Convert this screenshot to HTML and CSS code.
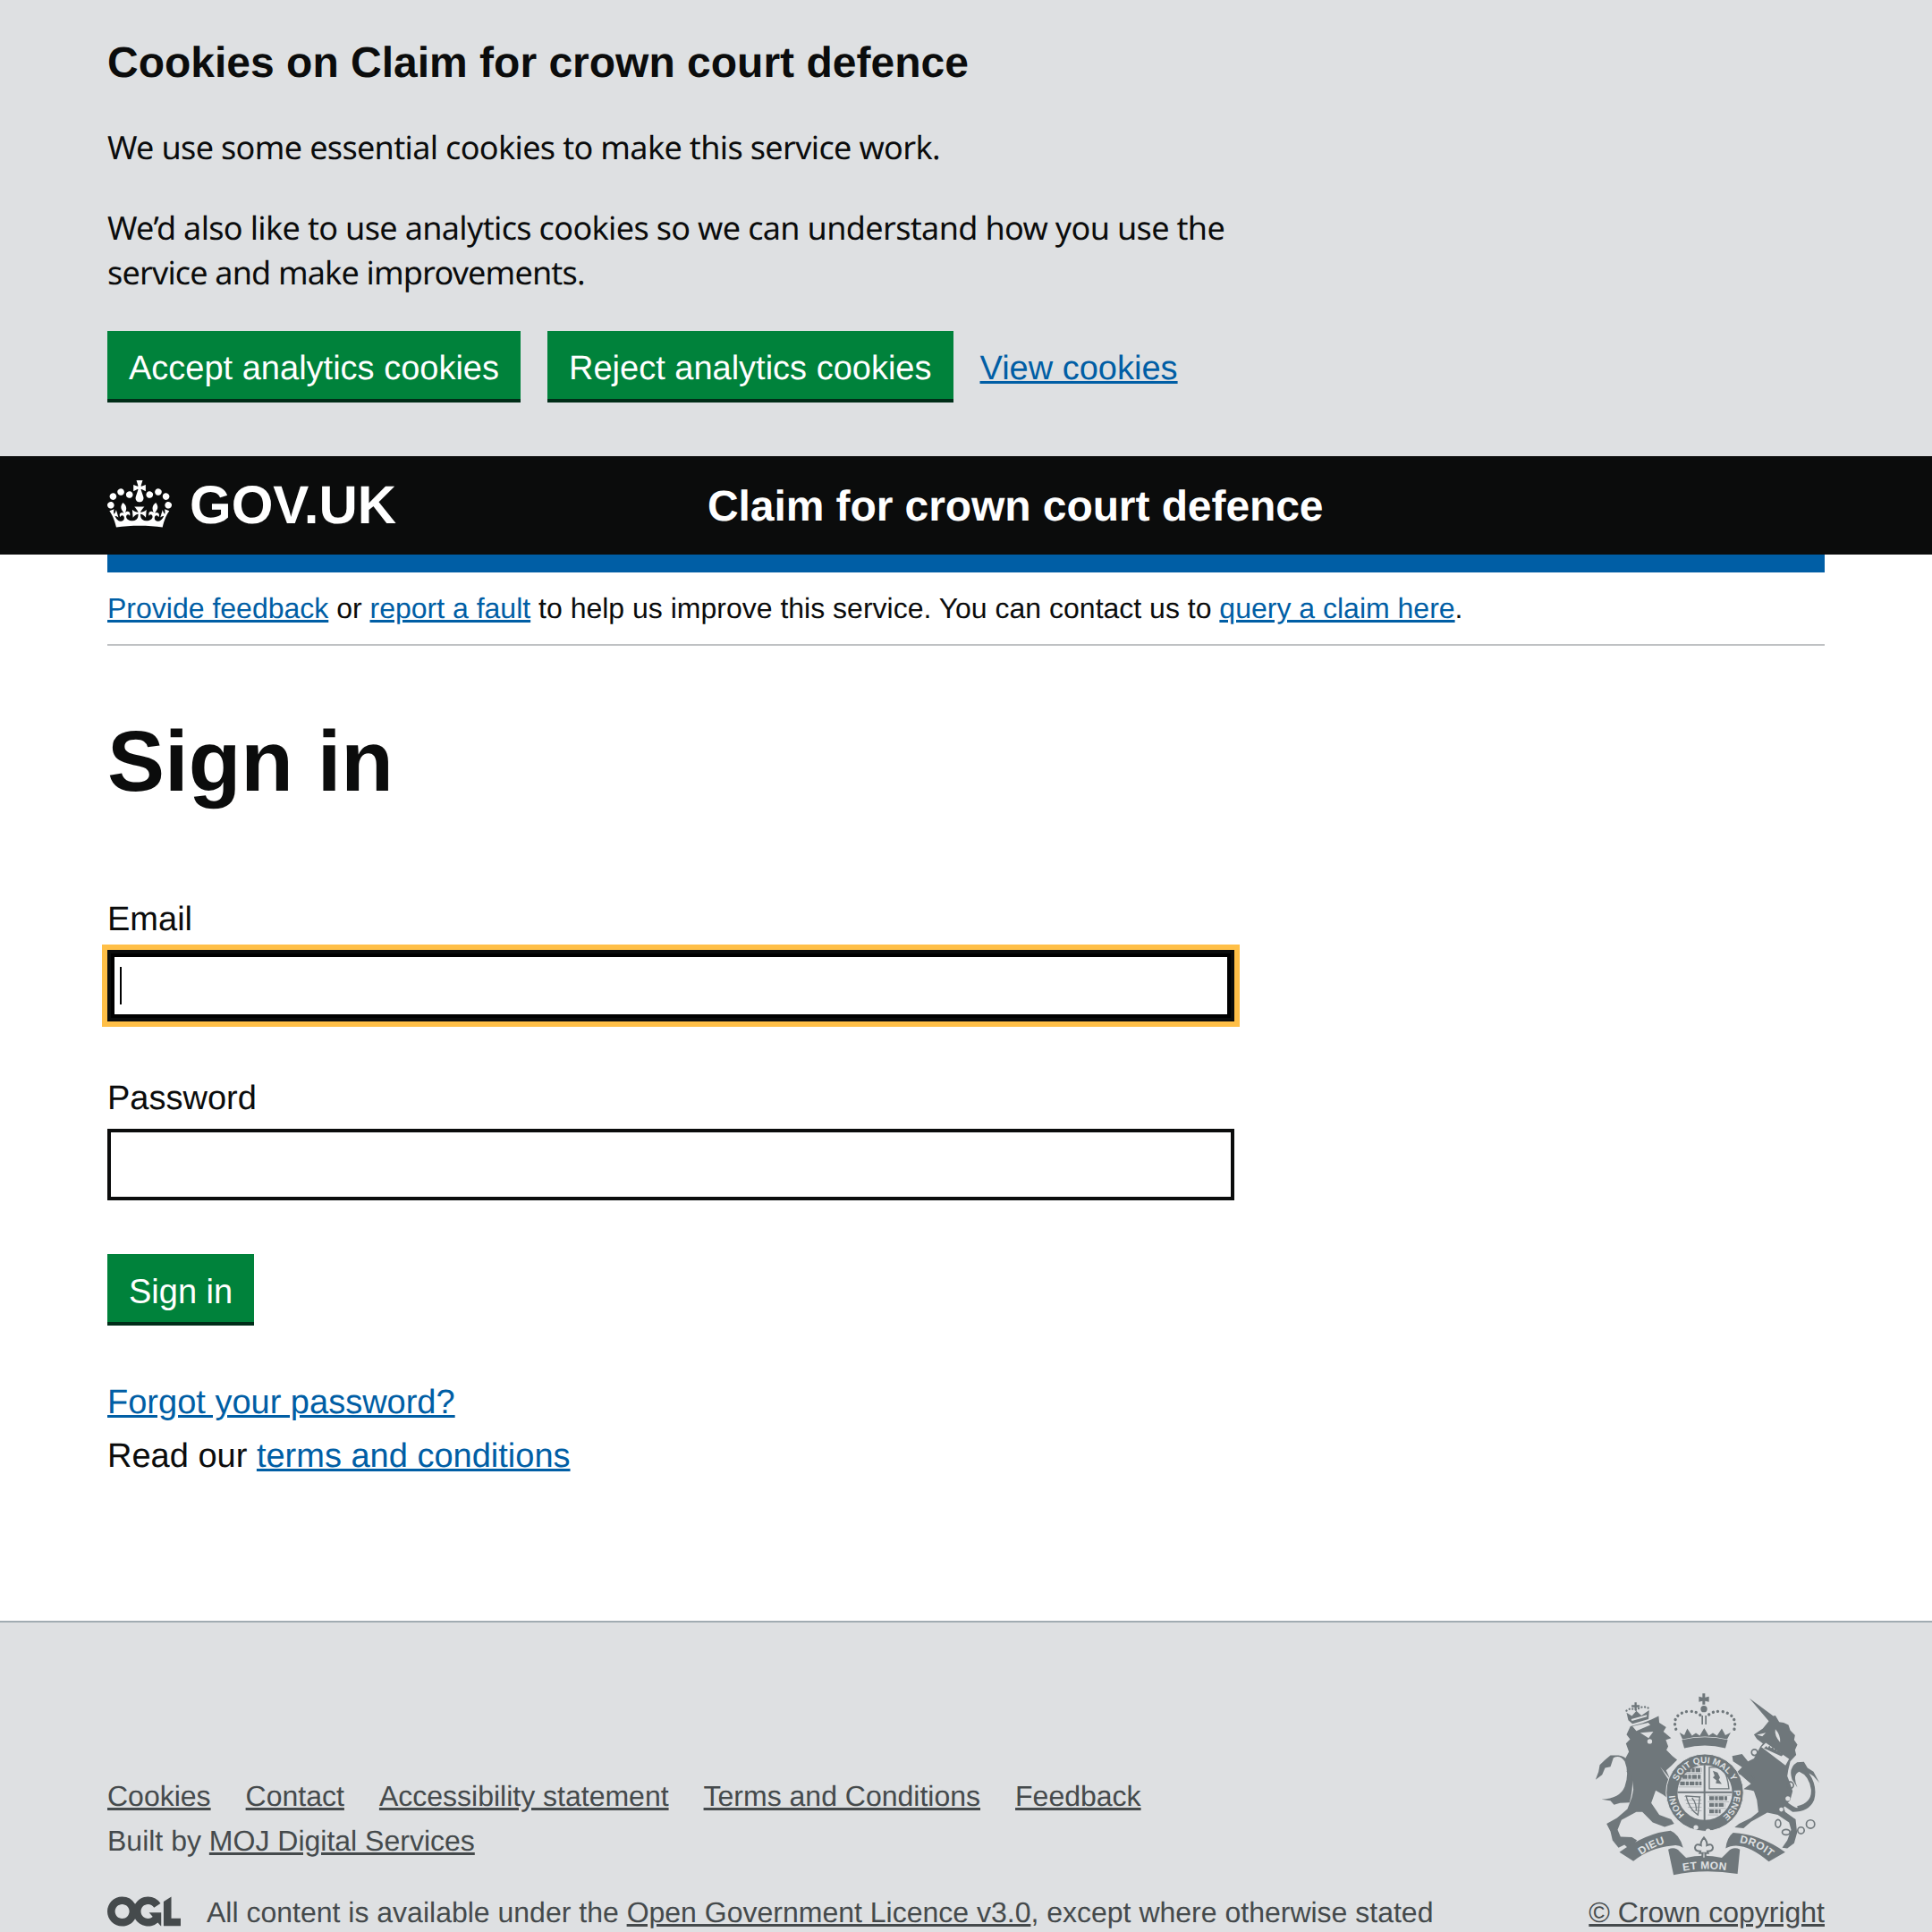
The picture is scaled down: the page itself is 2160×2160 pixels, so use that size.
FILE: index.html
```
<!DOCTYPE html>
<html lang="en">
<head>
<meta charset="utf-8">
<title>Sign in - Claim for crown court defence</title>
<link rel="stylesheet" href="styles.css">
</head>
<body>
<section class="cookie-banner">
  <div class="wrap">
    <h2 class="cookie-title">Cookies on Claim for crown court defence</h2>
    <p class="cookie-text">We use some essential cookies to make this service work.</p>
    <p class="cookie-text">We’d also like to use analytics cookies so we can understand how you use the<br><span class="cookie-tight">service and make improvements.</span></p>
    <div class="cookie-actions">
      <a class="btn" href="#">Accept analytics cookies</a>
      <a class="btn" href="#">Reject analytics cookies</a>
      <a class="link" href="#">View cookies</a>
    </div>
  </div>
</section>
<header class="site-header">
  <div class="wrap header-row">
    <a class="logo" href="#">
      <svg class="crown" viewBox="0 0 132 97" aria-hidden="true"><path fill="currentColor" fill-rule="evenodd" d="M25 30.2c3.5 1.5 7.7-.2 9.1-3.7 1.5-3.6-.2-7.8-3.9-9.2-3.6-1.4-7.6.3-9.1 3.9-1.4 3.5.3 7.5 3.9 9zM9 39.5c3.6 1.5 7.8-.2 9.2-3.7 1.5-3.6-.2-7.8-3.9-9.1-3.6-1.5-7.6.2-9.1 3.8-1.4 3.5.3 7.5 3.8 9zM4.4 57.2c3.5 1.5 7.7-.2 9.1-3.8 1.5-3.6-.2-7.7-3.9-9.1-3.5-1.5-7.6.3-9.1 3.8-1.4 3.5.3 7.6 3.9 9.1zm38.3-21.4c3.5 1.5 7.7-.2 9.1-3.8 1.5-3.6-.2-7.7-3.9-9.1-3.6-1.5-7.6.3-9.1 3.8-1.3 3.6.4 7.7 3.9 9.1zm64.4-5.6c-3.6 1.5-7.8-.2-9.1-3.7-1.5-3.6.2-7.8 3.8-9.2 3.6-1.4 7.7.3 9.2 3.9 1.3 3.5-.4 7.5-3.9 9zm15.9 9.3c-3.6 1.5-7.7-.2-9.1-3.7-1.5-3.6.2-7.8 3.7-9.1 3.6-1.5 7.7.2 9.2 3.8 1.5 3.5-.3 7.5-3.8 9zm4.7 17.7c-3.6 1.5-7.8-.2-9.2-3.8-1.5-3.6.2-7.7 3.9-9.1 3.6-1.5 7.7.3 9.2 3.8 1.3 3.5-.4 7.6-3.9 9.1zM89.3 35.8c-3.6 1.5-7.8-.2-9.2-3.8-1.4-3.6.2-7.7 3.9-9.1 3.6-1.5 7.7.3 9.2 3.8 1.4 3.6-.3 7.7-3.9 9.1zM69.7 17.7l8.9 4.7V9.3l-8.9 2.8c-.2-.3-.5-.6-.9-.9L72.4 0H59.6l3.6 11.2c-.3.3-.6.5-.9.9l-8.8-2.8v13.1l8.8-4.7c.3.3.6.7.9.9l-5 15.4v.1c-.2.8-.4 1.6-.4 2.4 0 4.1 3.1 7.5 7 8.1h.2c.3 0 .7.1 1 .1.4 0 .7 0 1-.1h.2c4-.6 7.1-4.1 7.1-8.1 0-.8-.1-1.7-.4-2.4V34l-5.1-15.4c.4-.2.7-.6 1-.9zM66 92.8c16.9 0 32.8 1.1 47.1 3.2 4-16.9 8.9-26.7 14-33.5l-9.6-3.4c1 4.9 1.1 7.2 0 10.2-1.5-1.4-3-4.3-4.2-8.7L108.6 76c2.8-2 5-3.2 7.5-3.3-4.4 9.4-10 11.9-13.6 11.2-4.3-.8-6.3-4.6-5.6-7.9 1-4.7 5.7-5.9 8-.5 4.3-8.7-3-11.4-7.6-8.8 7.1-7.2 7.9-13.5 2.1-21.1-8 6.1-8.1 12.3-4.5 20.8-4.7-5.4-12.1-2.5-9.5 6.2 3.4-5.2 7.9-2 7.2 3.1-.6 4.3-6.4 7.8-13.5 7.2-10.3-.9-10.9-8-11.2-13.8 2.5-.5 7.1 1.8 11 7.3L80.2 60c-4.1 4.4-8 5.3-12.3 5.4 1.4-4.4 8-11.6 8-11.6H55.5s6.4 7.2 7.9 11.6c-4.2-.1-8-1-12.3-5.4l1.4 16.4c3.9-5.5 8.5-7.7 10.9-7.3-.3 5.8-.9 12.8-11.1 13.8-7.2.6-12.9-2.9-13.5-7.2-.7-5 3.8-8.3 7.1-3.1 2.7-8.7-4.6-11.6-9.4-6.2 3.7-8.5 3.6-14.7-4.6-20.8-5.8 7.6-5 13.9 2.2 21.1-4.7-2.6-11.9.1-7.7 8.8 2.3-5.5 7.1-4.2 8.1.5.7 3.3-1.3 7.1-5.7 7.9-3.5.7-9-1.8-13.5-11.2 2.5.1 4.7 1.3 7.5 3.3l-4.7-15.4c-1.2 4.4-2.7 7.2-4.3 8.7-1.1-3-.9-5.3 0-10.2l-9.5 3.4c5 6.9 9.9 16.7 14 33.5 14.8-2.1 30.8-3.2 47.7-3.2z"/></svg>
      <span class="logotype">GOV.UK</span>
    </a>
    <a class="service-name" href="#">Claim for crown court defence</a>
  </div>
</header>
<div class="wrap">
  <div class="blue-bar"></div>
  <p class="phase"><a class="link" href="#">Provide feedback</a> or <a class="link" href="#">report a fault</a> to help us improve this service. You can contact us to <a class="link" href="#">query a claim here</a>.</p>
  <main class="main">
    <h1 class="page-title">Sign in</h1>
    <form class="form">
      <div class="field">
        <label class="label" for="email">Email</label>
        <div class="input-wrap">
          <input class="input input-focus" id="email" type="email">
          <span class="caret"></span>
        </div>
      </div>
      <div class="field">
        <label class="label" for="password">Password</label>
        <div class="input-wrap">
          <input class="input" id="password" type="password">
        </div>
      </div>
      <button class="btn btn-submit" type="button">Sign in</button>
    </form>
    <p class="body-line"><a class="link" href="#">Forgot your password?</a></p>
    <p class="body-line">Read our <a class="link" href="#">terms and conditions</a></p>
  </main>
</div>
<footer class="footer">
  <div class="wrap footer-row">
    <div class="footer-meta">
      <ul class="footer-links">
        <li><a href="#">Cookies</a></li>
        <li><a href="#">Contact</a></li>
        <li><a href="#">Accessibility statement</a></li>
        <li><a href="#">Terms and Conditions</a></li>
        <li><a href="#">Feedback</a></li>
      </ul>
      <p class="footer-built">Built by <a href="#">MOJ Digital Services</a></p>
      <div class="licence">
        <svg class="ogl" viewBox="0 0 483.2 195.7" aria-hidden="true"><path fill="currentColor" d="M421.5 142.8V.1l-50.7 32.3v161.1h112.4v-50.7zm-122.3-9.6A47.12 47.12 0 0 1 221 97.8c0-26 21.1-47.1 47.1-47.1 16.7 0 31.4 8.7 39.7 21.8l42.7-27.2A97.63 97.63 0 0 0 268.1 0c-36.5 0-68.3 20.1-85.1 49.7A98 98 0 0 0 97.8 0C43.9 0 0 43.9 0 97.8s43.9 97.8 97.8 97.8c36.5 0 68.3-20.1 85.1-49.7a97.76 97.76 0 0 0 149.6 25.4l19.4 22.2h3v-87.8h-80l24.3 27.5zM97.8 145c-26 0-47.1-21.1-47.1-47.1s21.1-47.1 47.1-47.1 47.2 21 47.2 47S123.8 145 97.8 145"/></svg>
        <span>All content is available under the <a href="#">Open Government Licence v3.0</a>, except where otherwise stated</span>
      </div>
    </div>
    <div class="footer-crest">
      <svg class="crest" viewBox="60 65 765 625" aria-hidden="true">
        <defs>
          <path id="garter-top" d="M343 370 A98 98 0 0 1 527 370"/>
          <path id="garter-right" d="M533 395 A98 98 0 0 1 494 486"/>
          <path id="garter-left" d="M366 478 A100 100 0 0 1 335 415"/>
          <path id="motto-l" d="M205 628 Q255 585 322 570"/>
          <path id="motto-m" d="M345 672 Q430 652 525 669"/>
          <path id="motto-r" d="M540 572 Q610 578 664 630"/>
        </defs>
        <g id="crest-art">
        <!-- royal crown -->
        <path class="crest-fill" d="M427 72h9v13l13-3v18l-13-3v12h-9v-12l-12 3V82l12 3z"/>
        <circle class="crest-fill" cx="432" cy="124" r="11"/>
        <path class="crest-fill" d="M424 146h5v30h-5zM436 146h5v30h-5z"/>
        <path class="crest-beadline" d="M338 192 Q322 142 378 132 Q410 130 424 150"/>
        <path class="crest-beadline" d="M534 192 Q546 142 490 132 Q458 130 442 150"/>
        <path class="crest-fill" d="M350 203 L366 212 L376 190 L392 214 L405 205 L418 214 L433 188 L448 214 L462 205 L476 214 L492 190 L504 212 L522 203 L510 226 Q435 208 360 226Z"/>
        <path class="crest-fill" d="M358 228 Q435 210 512 228 L504 256 Q435 238 366 256Z"/>
        <!-- lion tail -->
        <path class="crest-fill" d="M182 438 L150 440 L130 446 L118 432 L88 428 Q150 425 166 385 Q182 340 166 300 Q150 276 128 288 L118 318 L100 322 L90 345 L68 362 L78 335 L82 312 L100 295 L118 280 L145 280 Q188 286 192 345 Q194 400 182 438Z"/>
        <!-- lion -->
        <path class="crest-fill" d="M185 182 L225 172 L255 160 L280 148 L282 170 L305 185 L296 200 L322 222 L304 228 L312 250 L306 262 L326 282 L342 295 L322 315 L305 330 L335 395 L340 420 L320 432 L295 412 L270 398 L255 440 L282 480 L322 495 L332 510 L300 520 L260 505 L225 470 L205 470 L155 497 L142 530 L152 553 L190 555 L207 565 L195 582 L176 590 L165 580 L145 590 L125 565 L118 535 L105 510 L140 490 L175 460 L190 420 L195 395 L190 350 L172 335 L184 318 L168 290 L180 268 L170 240 L184 226 L172 210Z"/>
        <path class="crest-bg" d="M285 318 L340 385 L332 392Z"/>
        <path class="crest-bg" d="M192 182 L245 170 L252 178 L205 198Z M218 204 L262 200 L246 222Z"/>
        <circle class="crest-bg" cx="250" cy="233" r="8"/>
        <!-- lion crown -->
        <path class="crest-fill" d="M199 102h7v9h10v7h-10v9h-7v-9h-10v-7h10z"/>
        <path class="crest-beadline crest-beadline-sm" d="M172 130 Q185 118 205 128 Q225 110 247 122"/>
        <path class="crest-fill" d="M172 136 L190 148 L205 130 L222 146 L248 128 L246 158 L192 174 L178 162Z"/>
        <path class="crest-bg" d="M188 158 L240 144 L240 150 L190 164Z"/>
        <!-- unicorn tail -->
        <path class="crest-fill" d="M702 430 Q755 470 745 450 Q795 440 792 395 Q785 348 752 335 Q728 345 746 388 L728 360 Q715 322 745 303 L768 302 L780 322 L800 335 L820 372 L800 350 L785 340 Q815 385 802 430 Q785 470 730 470 L702 450Z"/>
        <!-- unicorn -->
        <path class="crest-fill" d="M585 88 L665 148 L672 146 L685 168 L700 170 L716 178 L722 196 L738 212 L735 228 L746 244 L738 262 L742 278 L722 300 L720 310 L715 330 L712 350 L722 375 L730 400 L722 430 L700 455 L705 470 L740 495 L745 540 L735 575 L712 592 L695 590 L712 565 L725 530 L718 505 L680 480 L645 472 L590 503 L565 525 L535 522 L550 510 L590 490 L615 470 L610 430 L600 400 L590 397 L565 393 L590 375 L555 345 L540 340 L560 320 L530 300 L527 282 L560 275 L580 300 L600 290 L622 250 L630 240 L610 225 L600 210 L630 190 L650 165Z"/>
        <path class="crest-bg" d="M625 252 L640 238 L718 292 L706 314Z"/>
        <path class="crest-fill" d="M634 256 l8 -8 4 7 6 -8 5 9 7 -5 3 9 7 -4 3 9 7 -3 4 9 6 -3 4 10 -6 5 -59 -27z"/>
        <path class="crest-bg" d="M688 236 Q668 214 672 192 Q690 212 688 236Z M610 211 L640 204 L628 216Z"/>
        <circle class="crest-ring" cx="602" cy="270" r="10"/>
        <circle class="crest-ring" cx="590" cy="357" r="10"/>
        <circle class="crest-ring" cx="722" cy="380" r="11"/>
        <circle class="crest-bg" cx="714" cy="425" r="8"/>
        <circle class="crest-bg" cx="692" cy="462" r="7"/>
        <ellipse class="crest-ring" cx="681" cy="509" rx="9" ry="13"/>
        <ellipse class="crest-ring" cx="708" cy="538" rx="13" ry="9"/>
        <circle class="crest-ring" cx="758" cy="532" r="11"/>
        <circle class="crest-ring" cx="790" cy="511" r="14"/>
        <!-- garter -->
        <circle class="crest-fill crest-outline" cx="435" cy="405" r="130"/>
        <circle class="crest-bg" cx="435" cy="405" r="92"/>
        <circle class="crest-bg" cx="405" cy="522" r="8"/>
        <circle class="crest-bg" cx="446" cy="534" r="8"/>
        <!-- shield -->
        <rect class="crest-fill" x="431" y="312" width="6" height="190"/>
        <rect class="crest-fill" x="343" y="401" width="184" height="6"/>
        <path class="crest-hatch" d="M372 330h52M360 352h64M352 374h72M450 424h60M450 446h52M450 468h38"/>
        <path class="crest-hair" d="M358 322h66M352 340h72M348 362h76M346 386h78M446 414h76M446 436h70M446 458h60M446 480h34"/>
        <path class="crest-line" d="M450 320h44q18 30 22 72h-66z"/>
        <path class="crest-fill" d="M462 332l16 6 8 16-4 8 10 14-20-2 2-10-12-10 6-6z"/>
        <path class="crest-hair" d="M366 418h56M368 430h56M372 442h52M378 454h46M388 466h36"/>
        <path class="crest-line" d="M372 416l46 4-6 60q-30-20-40-64z M392 422q16 20 14 44"/>
        <!-- ribbons -->
        <path class="crest-fill" d="M148 605 Q240 540 320 533 Q350 545 362 590 Q345 578 325 583 Q250 590 195 635Z"/>
        <path class="crest-fill" d="M312 596 Q335 585 352 604 L372 624 Q430 610 492 624 L512 604 Q530 585 553 596 L545 678 Q430 660 330 682Z"/>
        <path class="crest-fill" d="M530 540 Q620 545 705 605 L650 637 Q590 585 540 583 Q520 583 505 592 Q510 555 530 540Z"/>
        <path class="crest-lis" d="M432 556 q-12 14 -10 26 q-18 -8 -20 8 q0 12 18 12 l-2 6 h10 q-4 12 4 24 q8 -12 4 -24 h10 l-2 -6 q18 0 18 -12 q-2 -16 -20 -8 q2 -12 -10 -26z"/>
        <text class="crest-text crest-garter"><textPath href="#garter-top" startOffset="50%" text-anchor="middle">SOIT QUI MAL Y</textPath></text>
        <text class="crest-text crest-garter"><textPath href="#garter-right" startOffset="50%" text-anchor="middle">PENSE</textPath></text>
        <text class="crest-text crest-garter"><textPath href="#garter-left" startOffset="50%" text-anchor="middle">HONI</textPath></text>
        <text class="crest-text crest-motto"><textPath href="#motto-l" startOffset="50%" text-anchor="middle">DIEU</textPath></text>
        <text class="crest-text crest-motto"><textPath href="#motto-m" startOffset="50%" text-anchor="middle">ET MON</textPath></text>
        <text class="crest-text crest-motto"><textPath href="#motto-r" startOffset="50%" text-anchor="middle">DROIT</textPath></text>
        </g>
      </svg>
      <a class="crown-link" href="#">© Crown copyright</a>
    </div>
  </div>
</footer>
</body>
</html>
```
FILE: styles.css
```
* { box-sizing: border-box; }
html, body { margin: 0; height: 2160px; overflow: hidden; }
body {
  font-family: "Liberation Sans", Arial, sans-serif;
  color: #0b0c0c;
  background: #fff;
  text-rendering: geometricPrecision;
}
p, h1, h2, ul { margin: 0; padding: 0; }
.wrap { margin: 0 120px; }
.link { color: #005ea5; text-decoration: underline; }

.cookie-banner { background: #dee0e2; padding: 41px 0 60px; }
.cookie-title { font-size: 48px; line-height: 60px; font-weight: 700; margin-bottom: 39px; }
.cookie-text { font-family: "Noto Sans", sans-serif; font-size: 36px; line-height: 50px; letter-spacing: -0.65px; margin-bottom: 40px; }
.cookie-tight { letter-spacing: -0.83px; }
.cookie-actions { display: flex; align-items: center; gap: 30px; font-size: 38px; line-height: 50px; }
.cookie-actions .link { position: relative; top: 2px; }

.btn {
  display: inline-block;
  background: #00823b;
  color: #fff;
  font-family: inherit;
  font-size: 38px;
  line-height: 50px;
  padding: 17px 24px 9px;
  height: 76px;
  border: 0;
  border-radius: 0;
  box-shadow: 0 4px 0 #002d18;
  margin-bottom: 4px;
  text-decoration: none;
}

.site-header { background: #0b0c0c; color: #fff; height: 110px; }
.header-row { display: grid; grid-template-columns: 671px 1fr; align-items: center; height: 110px; }
.logo { display: flex; align-items: center; gap: 20px; color: #fff; text-decoration: none; }
.crown { width: 72px; height: 53px; display: block; margin-top: -4px; }
.logotype { font-size: 60px; line-height: 60px; font-weight: 700; }
.service-name { font-size: 48px; line-height: 60px; font-weight: 700; color: #fff; text-decoration: none; letter-spacing: -0.08px; padding-top: 3px; }

.blue-bar { height: 20px; background: #005ea5; }
.phase { font-size: 32px; line-height: 50px; padding: 15px 0; border-bottom: 2px solid #bfc1c3; }

.main { padding-top: 80px; }
.page-title { font-size: 96px; line-height: 100px; font-weight: 700; margin-bottom: 100px; }
.form { width: 1260px; }
.field { margin-bottom: 60px; }
.label { display: block; font-size: 38px; line-height: 50px; padding-top: 1px; margin-bottom: 9px; height: 51px; }
.input-wrap { position: relative; height: 80px; }
.input {
  display: block;
  width: 1260px;
  height: 80px;
  border: 4px solid #0b0c0c;
  border-radius: 0;
  background: #fff;
  padding: 0;
  font-size: 38px;
}
.input-focus { outline: 6px solid #ffbf47; outline-offset: 0; box-shadow: inset 0 0 0 4px #000; }
.caret { position: absolute; left: 14px; top: 19px; width: 2px; height: 42px; background: #000; }
.btn-submit { height: 76px; margin-bottom: 60px; display: block; }
.body-line { font-size: 38px; line-height: 60px; }

.footer { position: absolute; left: 0; right: 0; top: 1812px; background: #dee0e2; border-top: 2px solid #a1acb2; color: #454a4c; padding-top: 80px; }
.footer a { color: #454a4c; text-decoration: underline; }
.footer-row { display: flex; justify-content: space-between; align-items: flex-end; }
.footer-links { display: flex; gap: 39px; list-style: none; font-size: 32px; line-height: 50px; }
.footer-built { font-size: 32px; line-height: 50px; margin-bottom: 30px; }
.licence { display: flex; align-items: center; gap: 29px; font-size: 32px; line-height: 50px; }
.ogl { width: 82px; height: 34px; display: block; flex: none; color: #454a4c; margin-top: -2px; }
.footer-crest { display: flex; flex-direction: column; align-items: center; }
.crest { width: 255px; height: 208px; display: block; margin-bottom: 14px; margin-top: -3px; }
.crown-link { font-size: 32px; line-height: 50px; }

.crest-fill { fill: #6f777b; }
.crest-bg { fill: #dee0e2; }
.crest-outline { stroke: #dee0e2; stroke-width: 3; }
.crest-beadline { fill: none; stroke: #6f777b; stroke-width: 10; stroke-linecap: round; stroke-dasharray: 0.1 16; }
.crest-beadline-sm { stroke-width: 7; stroke-dasharray: 0.1 11; }
.crest-ring { fill: none; stroke: #6f777b; stroke-width: 5; }
.crest-lis { fill: #dee0e2; stroke: #6f777b; stroke-width: 6; }
.crest-hatch { fill: none; stroke: #6f777b; stroke-width: 13; stroke-dasharray: 16 3 10 3; }
.crest-hair { fill: none; stroke: #6f777b; stroke-width: 2; opacity: .6; }
.crest-line { fill: none; stroke: #6f777b; stroke-width: 4; }
.crest-text { font-family: "Liberation Sans", Arial, sans-serif; font-weight: 700; fill: #dee0e2; }
.crest-garter { font-size: 30px; }
.crest-motto { font-size: 36px; letter-spacing: 1px; }
```
